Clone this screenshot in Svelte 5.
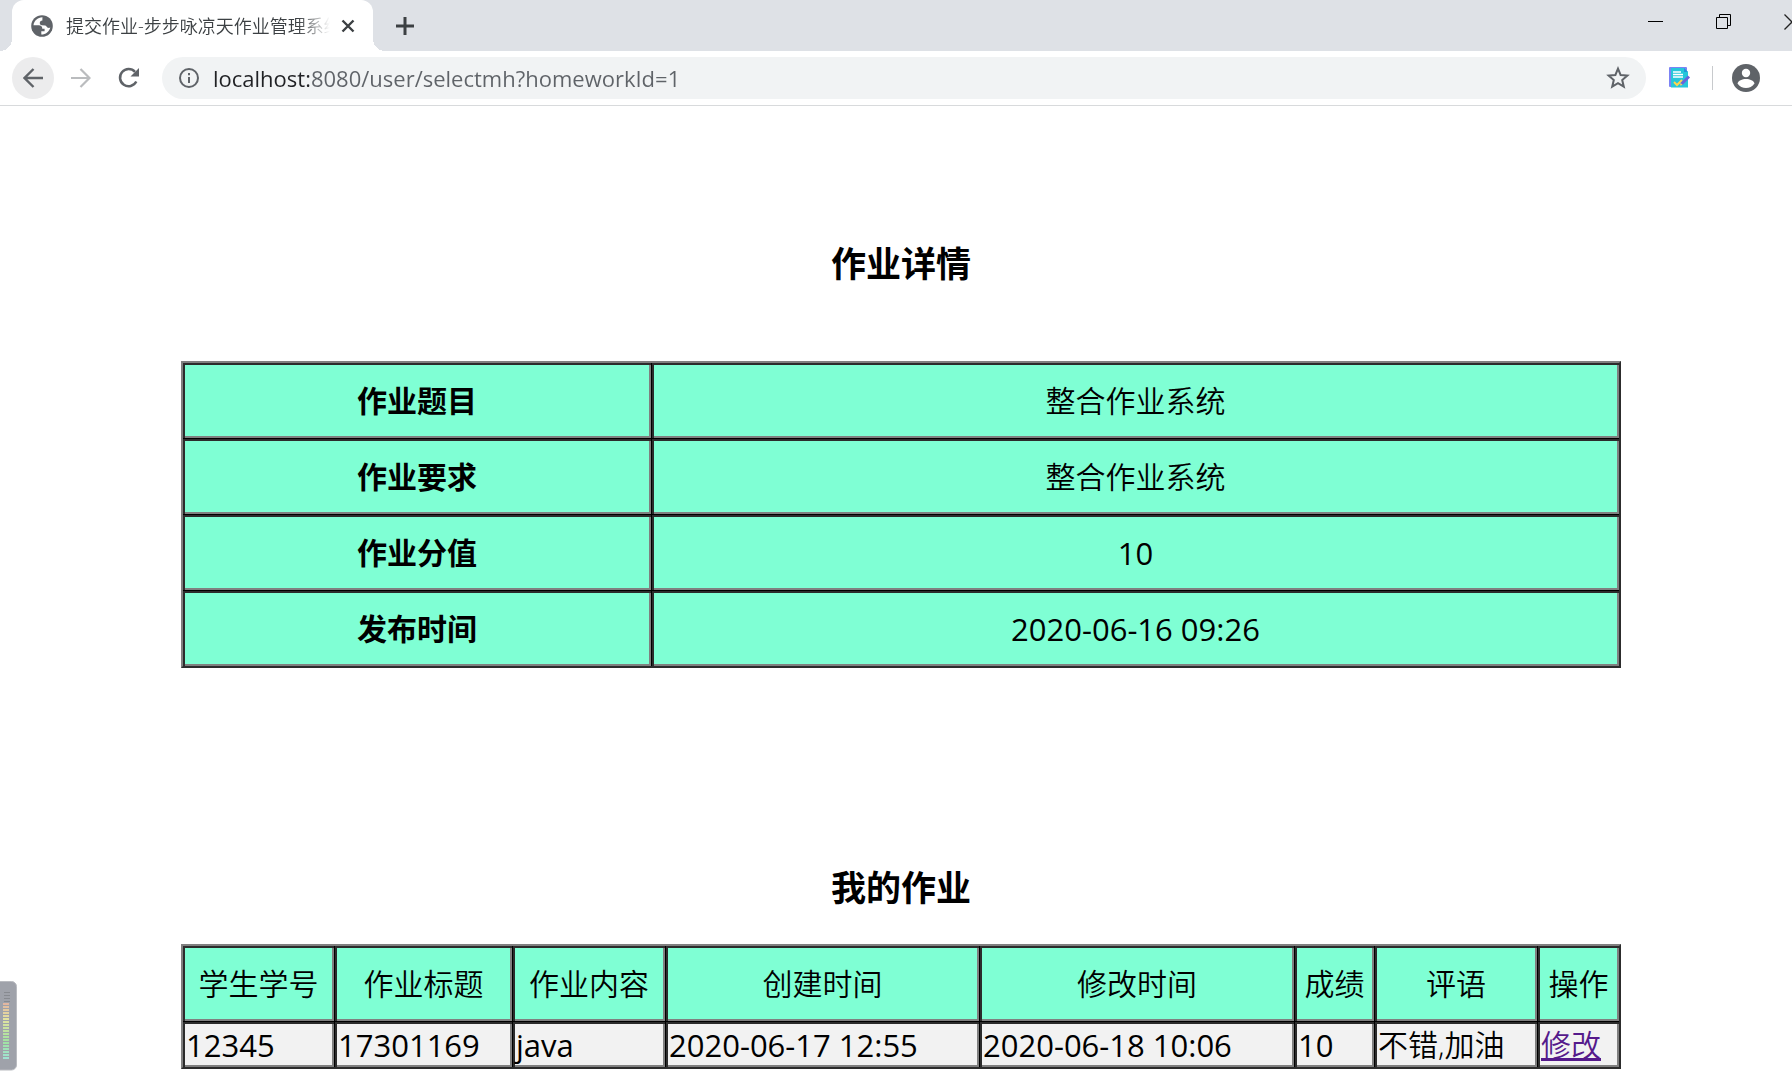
<script>
  let url = "localhost:8080/user/selectmh?homeworkId=1";

  let details = [
    { label: "作业题目", value: "整合作业系统" },
    { label: "作业要求", value: "整合作业系统" },
    { label: "作业分值", value: "10", latin: true },
    { label: "发布时间", value: "2020-06-16 09:26", latin: true }
  ];

  let columns = [
    { title: "学生学号", width: 151 },
    { title: "作业标题", width: 178 },
    { title: "作业内容", width: 153 },
    { title: "创建时间", width: 314 },
    { title: "修改时间", width: 315 },
    { title: "成绩", width: 80 },
    { title: "评语", width: 163 },
    { title: "操作", width: 82 }
  ];
  let total = columns.reduce((sum, c) => sum + c.width, 0);

  let homeworks = [
    {
      number: "12345",
      title: "17301169",
      content: "java",
      created: "2020-06-17 12:55",
      modified: "2020-06-18 10:06",
      score: "10",
      comment: "不错,加油"
    }
  ];

  let levels = Array.from({ length: 19 }, (_, i) => i);
</script>

<div class="browser">
  <header>
    <div class="tabstrip">
      <div class="tab">
        <svg viewBox="0 0 22 22" width="22" height="22">
          <circle cx="11" cy="11" r="10.800" fill="#5f6368" />
          <path d="M11.500 2.300C6.500 2.500 3 5.800 2.500 10.300h5.200c2.500 0 3.600 1.200 3.600 3.400h2.300v2.600h-3.300v3.300c4.500 0 8-3 9-7.100-1 .6-2 .5-3-.1-.9-.5-1-1.600-2.200-1.800l-3.300-.3c-1.300-.2-2-1-2-2.300 0-1.500 1-2.400 2.600-2.400V3.800z" fill="#fff" />
        </svg>
        <span class="title">提交作业-步步咏凉天作业管理系统</span>
        <button class="close" aria-label="关闭标签页">
          <svg viewBox="0 0 14 14" width="14" height="14"><path d="M1.500 1.500l11 11M12.500 1.500l-11 11" stroke="#3c4043" stroke-width="2.400" /></svg>
        </button>
      </div>
      <button class="plus" aria-label="新标签页">
        <svg viewBox="0 0 18 18" width="18" height="18"><path d="M9 0v18M0 9h18" stroke="#3c4043" stroke-width="3" /></svg>
      </button>
      <div class="window">
        <button aria-label="最小化">
          <svg viewBox="0 0 16 16" width="16" height="16"><path d="M0 7.500h15" stroke="#000" /></svg>
        </button>
        <button aria-label="还原">
          <svg viewBox="0 0 16 16" width="16" height="16"><path d="M.5 3.500h11v11H.5zM3.500 3.500v-3h11v11h-3" fill="none" stroke="#000" /></svg>
        </button>
        <button aria-label="关闭">
          <svg viewBox="0 0 16 16" width="16" height="16"><path d="M.5.5l15 15M15.500.5l-15 15" stroke="#222" stroke-width="1.300" /></svg>
        </button>
      </div>
    </div>

    <div class="toolbar">
      <button class="nav back" aria-label="后退">
        <svg viewBox="0 0 20 20" width="20" height="20"><path d="M20 10H2M10.500 1L1.500 10l9 9" fill="none" stroke="#5f6368" stroke-width="2.400" /></svg>
      </button>
      <button class="nav" aria-label="前进">
        <svg viewBox="0 0 20 20" width="20" height="20"><path d="M0 10h18M9.500 1l9 9-9 9" fill="none" stroke="#babcbe" stroke-width="2.200" /></svg>
      </button>
      <button class="nav" aria-label="重新加载">
        <svg viewBox="0 0 22 22" width="22" height="22">
          <path d="M18.300 14.500A8.600 8.600 0 1 1 17 4.800" fill="none" stroke="#5f6368" stroke-width="2.500" />
          <path d="M21 1v8.500h-8.500z" fill="#5f6368" />
        </svg>
      </button>
      <div class="address">
        <svg viewBox="0 0 20 20" width="20" height="20">
          <circle cx="10" cy="10" r="9" fill="none" stroke="#5f6368" stroke-width="2" />
          <path d="M10 9v6M10 5v2.200" stroke="#5f6368" stroke-width="2" />
        </svg>
        <input type="text" aria-label="地址" bind:value={url} />
        <button aria-label="收藏">
          <svg viewBox="0 0 24 24" width="24" height="24"><path d="M12 2.700l2.600 6.300 6.800.6-5.200 4.500 1.600 6.600-5.800-3.500-5.800 3.500 1.600-6.600-5.200-4.500 6.800-.6z" fill="none" stroke="#5f6368" stroke-width="2" /></svg>
        </button>
      </div>
      <button aria-label="作业扩展">
        <svg viewBox="0 0 22 22" width="22" height="22">
          <rect x="0" y="0" width="18" height="20" rx="1" fill="#7c83f5" />
          <path d="M2 1h13l4 4v15.500H2z" fill="#26c6da" />
          <path d="M15 1v4h4z" fill="#2196d8" />
          <path d="M4 5h8M4 7.500h10M4 10h10" stroke="#fff" stroke-width="1.500" />
          <path d="M5 15l3 3 5-5" fill="none" stroke="#ffd54f" stroke-width="2" />
          <path d="M20 9.500L12.500 17" stroke="#6a63dc" stroke-width="3" />
          <path d="M11 18.500l.6-2.600 2 2z" fill="#ffca6a" />
        </svg>
      </button>
      <span class="divider"></span>
      <button aria-label="用户">
        <svg viewBox="0 0 28 28" width="28" height="28">
          <circle cx="14" cy="14" r="14" fill="#5f6368" />
          <circle cx="14" cy="9" r="4.200" fill="#fff" />
          <path d="M5.500 19.500c1.500-6 15.500-6 17 0-4 6-13 6-17 0z" fill="#fff" />
        </svg>
      </button>
      <button class="menu" aria-label="菜单">
        <svg viewBox="0 0 4 20" width="4" height="20">
          <circle cx="2" cy="2" r="2" fill="#5f6368" />
          <circle cx="2" cy="10" r="2" fill="#5f6368" />
          <circle cx="2" cy="18" r="2" fill="#5f6368" />
        </svg>
      </button>
    </div>
  </header>

  <main>
    <h3>作业详情</h3>
    <table class="details">
      <tbody>
        {#each details as row}
          <tr>
            <th scope="row">{row.label}</th>
            <td class:latin={row.latin}>{row.value}</td>
          </tr>
        {/each}
      </tbody>
    </table>

    <h3 class="mine">我的作业</h3>
    <table class="homeworks">
      <colgroup>
        {#each columns as column}
          <col style="width: {(column.width / total) * 100}%" />
        {/each}
      </colgroup>
      <thead>
        <tr>
          {#each columns as column}
            <th scope="col">{column.title}</th>
          {/each}
        </tr>
      </thead>
      <tbody>
        {#each homeworks as work}
          <tr>
            <td class="latin">{work.number}</td>
            <td class="latin">{work.title}</td>
            <td class="latin">{work.content}</td>
            <td class="latin">{work.created}</td>
            <td class="latin">{work.modified}</td>
            <td class="latin">{work.score}</td>
            <td>{work.comment}</td>
            <td><a href="#edit">修改</a></td>
          </tr>
        {/each}
      </tbody>
    </table>
  </main>

  <!-- level meter docked to the left edge -->
  <svg class="meter" viewBox="0 0 17 90" width="17" height="90" aria-hidden="true">
    <rect x="-6" y="0.500" width="22.500" height="88.500" rx="5" fill="#9fa2aa" stroke="#b9bbc0" />
    <path d="M4 11.500h6M4 14.500h6M4 17.500h6M4 20.500h6" stroke="#878a90" />
    {#each levels as i}
      <rect x="3" y={22 + i * 3} width="6" height="2" fill="hsl({20 + i * 8}, 55%, 76%)" />
    {/each}
  </svg>
</div>

<style>
  :global(body) {
    margin: 0;
    background: #fff;
    overflow: hidden;
  }
  .browser {
    position: relative;
    /* the window runs a little past the right edge */
    width: calc(100% + 10px);
    font-family: "Open Sans", "Noto Sans CJK SC", sans-serif;
    color: #000;
  }
  button {
    display: flex;
    align-items: center;
    justify-content: center;
    flex: none;
    padding: 0;
    border: none;
    background: none;
  }
  svg {
    display: block;
    flex: none;
  }
  .tabstrip {
    display: flex;
    height: 51px;
    padding-left: 12px;
    background: #dee1e6;
  }
  .tab {
    position: relative;
    display: flex;
    align-items: center;
    box-sizing: border-box;
    width: 361px;
    padding: 0 16px 0 19px;
    border-radius: 12px 12px 0 0;
    background: #fff;
  }
  .tab::before,
  .tab::after {
    content: "";
    position: absolute;
    bottom: 0;
    width: 12px;
    height: 12px;
  }
  .tab::before {
    right: 100%;
    background: radial-gradient(circle at 0 0, transparent 12px, #fff 12px);
  }
  .tab::after {
    left: 100%;
    background: radial-gradient(circle at 100% 0, transparent 12px, #fff 12px);
  }
  .title {
    flex: 1;
    margin: 0 9px 0 13px;
    overflow: hidden;
    white-space: nowrap;
    font-size: 18px;
    font-weight: 350;
    line-height: 26px;
    color: #3c4043;
    mask-image: linear-gradient(90deg, #000 calc(100% - 32px), transparent);
  }
  .close {
    width: 18px;
    height: 18px;
  }
  .plus {
    width: 42px;
    margin-left: 11px;
  }
  .window {
    display: flex;
    gap: 52px;
    height: 43px;
    margin: 0 2px 0 auto;
  }
  .toolbar {
    display: flex;
    align-items: center;
    height: 54px;
    padding-left: 12px;
    border-bottom: 1px solid #d8dadc;
  }
  .nav {
    width: 42px;
    height: 42px;
    margin-right: 6px;
    border-radius: 50%;
  }
  .back {
    background: #ececed;
  }
  .address {
    display: flex;
    flex: 1;
    align-items: center;
    height: 42px;
    margin: 0 23px 0 6px;
    padding: 0 16px 0 17px;
    border-radius: 21px;
    background: #f1f3f4;
  }
  .address input {
    flex: 1;
    min-width: 0;
    height: 30px;
    margin-left: 14px;
    padding: 0;
    border: none;
    outline: none;
    font: 22px "Open Sans", sans-serif;
    color: transparent;
    /* host name darker than the rest of the address */
    background: linear-gradient(90deg, #202124 96px, #5f6368 96px);
    background-clip: text;
  }
  .divider {
    width: 1px;
    height: 24px;
    margin: 0 19px 0 21px;
    background: #c8cacd;
  }
  .menu {
    margin: 0 6px 0 32px;
  }
  main {
    padding: 135px 1px 10px;
  }
  h3 {
    margin: 0 0 74px;
    font-size: 35px;
    font-weight: 700;
    line-height: 46px;
    text-align: center;
  }
  .mine {
    margin: 197px 0 33px;
  }
  table {
    width: 80%;
    margin: 0 auto;
    border: 2px solid;
    border-color: #808080 #2c2c2c #2c2c2c #808080;
    border-spacing: 0;
    table-layout: fixed;
    font-size: 30px;
    line-height: 40px;
  }
  th,
  td {
    box-sizing: border-box;
    height: 75px;
    padding: 0;
    border: 0 solid #000;
    background: #7fffd4;
    box-shadow: inset 2px 2px #2c2c2c, inset -2px -2px #808080;
    font-weight: 350;
    text-align: center;
    white-space: nowrap;
  }
  th + th,
  th + td,
  td + td {
    border-left-width: 1px;
  }
  tr + tr > *,
  tbody td {
    border-top-width: 1px;
  }
  .details tr:first-child td {
    border-top-width: 0;
  }
  .details tr + tr > * {
    height: 76px;
  }
  .details th {
    width: 468px;
    font-weight: 700;
  }
  .homeworks td {
    height: 46px;
    padding: 0 3px;
    background: #f2f2f2;
    text-align: left;
  }
  td.latin {
    font-size: 31px;
    font-weight: 400;
  }
  a {
    color: #551a8b;
    text-decoration: underline 3px;
  }
  .meter {
    position: absolute;
    left: 0;
    top: 981px;
  }
</style>
